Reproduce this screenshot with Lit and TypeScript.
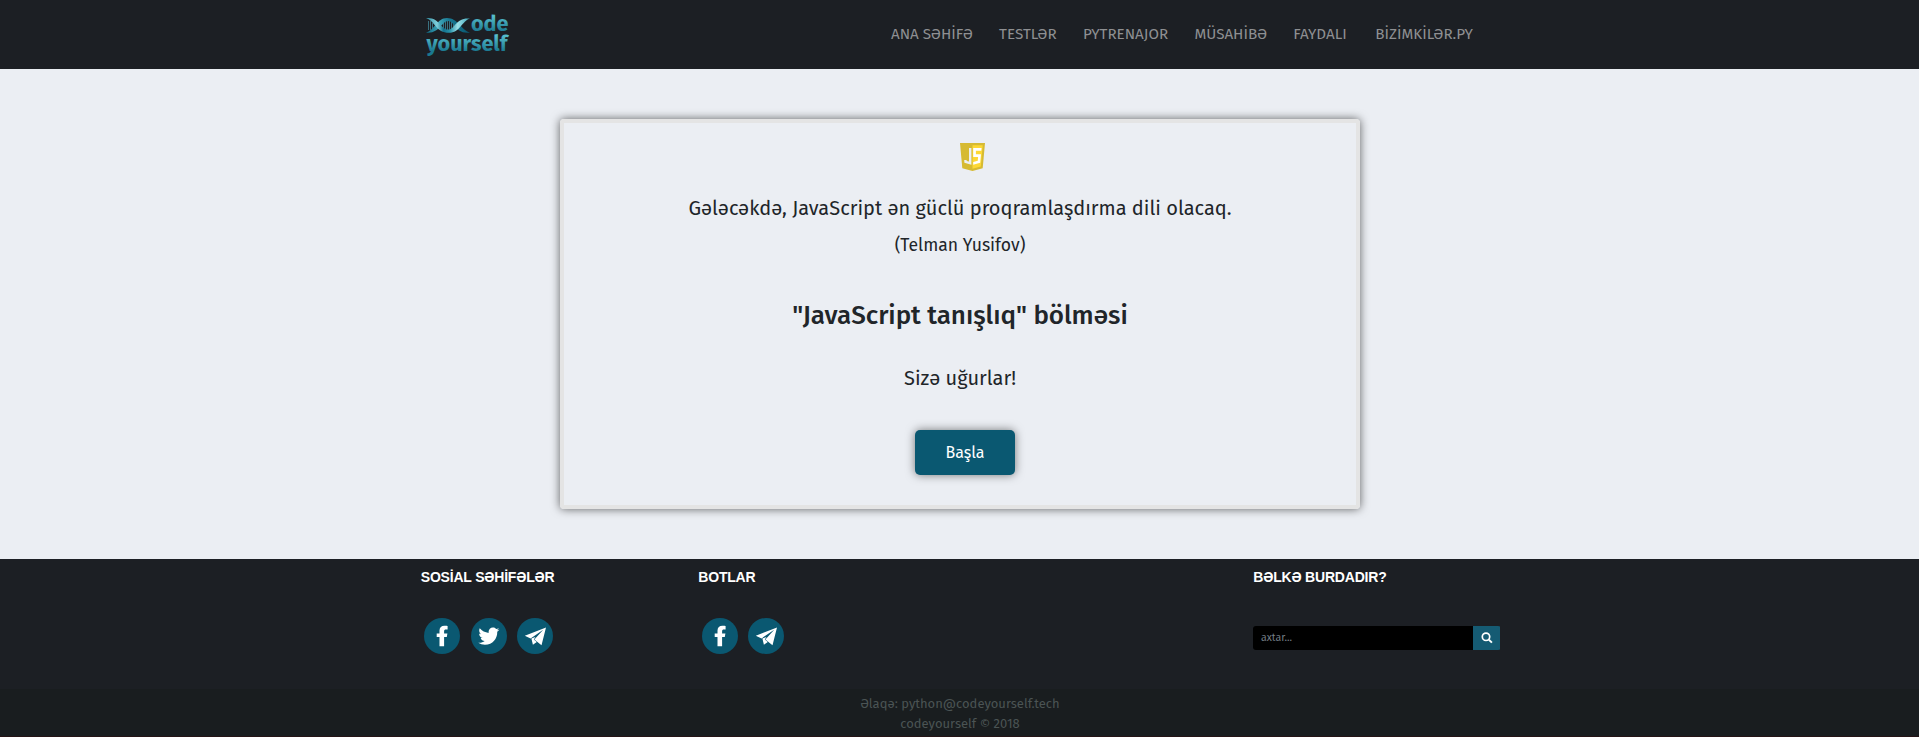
import { LitElement, html, css, svg } from "lit";
import { customElement, property } from "lit/decorators.js";

const icons: Record<string, unknown> = {
  facebook: svg`<path fill="#fff" d="M15.500 28.300V19H12.700V15.400H15.500V12.600C15.500 9.500 17.400 7.800 20.400 7.800C22 7.800 23.600 8 23.600 8V11.500H22C20.600 11.500 20.100 12.200 20.100 13.100V15.400H23.400L22.800 19H20.100V28.300Z"/>`,
  twitter: svg`<g transform="translate(7.300 7.600) scale(.0412)"><path fill="#fff" d="M459.4 151.7c.3 4.5.3 9.1.3 13.6 0 138.700-105.600 298.600-298.600 298.600-59.500 0-114.700-17.200-161.100-47.100 8.400 1 16.600 1.300 25.300 1.300 49.100 0 94.200-16.600 130.300-44.800-46.100-1-84.800-31.200-98.100-72.800 6.500 1 13 1.600 19.800 1.600 9.400 0 18.800-1.300 27.600-3.600-48.100-9.700-84.100-52-84.100-103v-1.300c14 7.800 30.200 12.700 47.400 13.300-28.300-18.800-46.800-51-46.800-87.400 0-19.500 5.200-37.400 14.300-53 51.700 63.700 129.300 105.300 216.400 109.800-1.600-7.800-2.600-15.900-2.600-24 0-57.800 46.800-104.900 104.900-104.900 30.200 0 57.500 12.700 76.700 33.100 23.700-4.500 46.500-13.300 66.600-25.300-7.800 24.400-24.400 44.800-46.100 57.800 21.100-2.300 41.600-8.100 60.400-16.200-14.300 20.800-32.200 39.300-52.600 54.300z"/></g>`,
  telegram: svg`<path fill="#fff" d="M29 9.500 7.800 17.800 13.600 20.400 26.200 11.700 17.400 21.600 24.500 27.300Z"/><path fill="#fff" d="M14.400 20.600 15.900 26.800 19.800 24 16.800 21.600 18.500 19Z"/>`,
};

@customElement("social-icon")
class SocialIcon extends LitElement {
  @property() name = "facebook";
  static styles = css`
    :host { display: block; width: 36px; height: 36px; }
    svg { display: block; }
  `;
  render() {
    return html`<svg width="36" height="36" viewBox="0 0 36 36"><circle cx="18" cy="18" r="18" fill="#0a5871"/>${icons[this.name]}</svg>`;
  }
}

const menu = ["ANA SƏHİFƏ", "TESTLƏR", "PYTRENAJOR", "MÜSAHİBƏ", "FAYDALI", "BİZİMKİLƏR.PY"];

@customElement("app-root")
class AppRoot extends LitElement {
  static styles = css`
    :host { display: flex; flex-direction: column; height: 737px; overflow: hidden; background: #ebeef3; color: #212529; font-family: "Fira Sans", "Noto Sans", sans-serif; white-space: nowrap; }
    header { height: 69px; flex: none; background: #1c1f24; display: flex; align-items: flex-start; padding-left: 424px; box-sizing: border-box; }
    .logo { display: block; margin-top: 12px; width: 90px; height: 46px; }
    .logo text { font-family: "Fira Sans", "Noto Sans", sans-serif; font-weight: 700; font-size: 21px; }
    nav { display: flex; gap: 26.300px; margin-left: 377px; margin-top: 19px; font-size: 15.200px; line-height: 30px; color: #8e8f92; }
    nav span:last-child { margin-left: 2.300px; }
    main { flex: none; height: 490px; display: flex; justify-content: center; align-items: flex-start; }
    .card { box-sizing: border-box; width: 800px; height: 390px; margin: 50px 0 0 1px; border: 4px solid #e4e4e4; border-radius: 4px; box-shadow: 0 0 10px rgba(0,0,0,.6); display: flex; flex-direction: column; align-items: center; }
    .js { display: block; flex: none; margin: 20px 0 0 25px; }
    .quote { margin-top: 22px; font-size: 20px; line-height: 30px; }
    .author { margin-top: 8px; font-size: 17.600px; line-height: 30px; }
    .title { margin-top: 35px; font-size: 26px; line-height: 40px; font-weight: 500; letter-spacing: -.04px; }
    .luck { margin-top: 27px; font-size: 20px; line-height: 30px; }
    .start { flex: none; display: flex; justify-content: center; box-sizing: border-box; width: 100px; height: 45px; margin: 37px 0 0 10px; padding: 0; border: 0; border-radius: 5px; background: #0a5871; color: #fff; font: 16px/46px "Fira Sans", "Noto Sans", sans-serif; box-shadow: 0 0 10px rgba(0,0,0,.5); }
    footer { height: 130px; flex: none; background: #1c1f24; display: grid; grid-template-columns: repeat(4, 277.5px); padding-left: 405.5px; }
    .col { padding: 3px 15px 0; }
    .head { color: #fff; font: bold 14px/30px "Liberation Sans", sans-serif; letter-spacing: -.2px; padding-left: .3px; }
    .icons { display: flex; gap: 10px; padding: 26px 0 0 3.500px; }
    .icons .first { margin-right: 1px; }
    .search { display: flex; height: 24px; margin-top: 34px; border-radius: 3px; overflow: hidden; }
    .field { width: 212px; padding-left: 8px; background: #000; color: #747d85; font-size: 10.500px; line-height: 23px; }
    .go { width: 27px; background: #155b73; display: flex; align-items: center; justify-content: center; }
    .bottom { flex: none; background: #191d1f; border-bottom: 1px solid #251416; display: flex; flex-direction: column; align-items: center; padding: 5px 0 0 1px; height: 42px; font-size: 13px; line-height: 20px; color: #4b5454; }
  `;
  render() {
    return html`
      <header>
        <svg class="logo" viewBox="0 0 90 46">
          <defs>
            <linearGradient id="a" x1="0" y1="0" x2="0" y2="1"><stop offset=".2" stop-color="#56bccb"/><stop offset=".8" stop-color="#1a7890"/></linearGradient>
            <linearGradient id="b" x1="0" y1="0" x2="1" y2="0"><stop offset="0" stop-color="#2f8da3"/><stop offset=".25" stop-color="#7fd0dc"/><stop offset=".4" stop-color="#12708c"/><stop offset=".55" stop-color="#2a93aa"/><stop offset=".72" stop-color="#9be0e8"/><stop offset="1" stop-color="#3ba3b7"/></linearGradient>
            <linearGradient id="c" x1="0" y1="0" x2="1" y2="0"><stop offset="0" stop-color="#0c6580"/><stop offset=".3" stop-color="#3fa6b9"/><stop offset=".5" stop-color="#1a7b95"/><stop offset="1" stop-color="#095770"/></linearGradient>
          </defs>
          <path d="M4.500 9V18M6.500 9V18M8.500 11V17M19.500 11V17M21.500 9V18M23.500 8V19M25.500 8V19M27.500 9V18M29.500 11V16" stroke="#3a7080" stroke-width="1"/>
          <path d="M2 20.500C11 18 13 6 23 6C34 6 37 18 46 20.500C31 22.500 31 9 24 9C18 9 15 22.500 2 20.500Z" fill="url(#c)"/>
          <path d="M2 6C15 4.500 17 17.500 24 17.500C31 17.500 32 5 46 6.500C38 9 36 20.800 25 20.800C12 20.800 11 9 2 6Z" fill="url(#b)"/>
          <text x="47" y="19" textLength="37.500" lengthAdjust="spacingAndGlyphs" fill="url(#a)">ode</text>
          <text x="2.500" y="38.500" textLength="81" lengthAdjust="spacingAndGlyphs" fill="url(#a)">yourself</text>
        </svg>
        <nav>${menu.map((t) => html`<span>${t}</span>`)}</nav>
      </header>
      <main>
        <section class="card">
          <svg class="js" width="25" height="28" viewBox="0 0 25 28">
            <path d="M0 0H25L22.700 25.200L12.500 28L2.300 25.200Z" fill="#d6ba32"/>
            <path d="M12.500 2.200H22.700L20.800 23.500L12.500 25.800Z" fill="#fdd835"/>
            <path d="M9 5H11.400V21.700L4.400 19.800L4.200 17H6.600L6.700 18L9 18.600Z" fill="#eceff1"/>
            <path d="M13.200 5H21.600L21.300 7.800H15.900V11.200H21L20.200 19.800L13.200 21.700V19L17.800 17.800L18.100 13.900H13.200Z" fill="#fff"/>
          </svg>
          <div class="quote">Gələcəkdə, JavaScript ən güclü proqramlaşdırma dili olacaq.</div>
          <div class="author">(Telman Yusifov)</div>
          <div class="title">"JavaScript tanışlıq" bölməsi</div>
          <div class="luck">Sizə uğurlar!</div>
          <button class="start">Başla</button>
        </section>
      </main>
      <footer>
        <div class="col">
          <div class="head">SOSİAL SƏHİFƏLƏR</div>
          <div class="icons"><social-icon class="first" name="facebook"></social-icon><social-icon name="twitter"></social-icon><social-icon name="telegram"></social-icon></div>
        </div>
        <div class="col">
          <div class="head">BOTLAR</div>
          <div class="icons"><social-icon name="facebook"></social-icon><social-icon name="telegram"></social-icon></div>
        </div>
        <div class="col"></div>
        <div class="col">
          <div class="head">BƏLKƏ BURDADIR?</div>
          <div class="search">
            <div class="field">axtar...</div>
            <div class="go"><svg width="12" height="12" viewBox="0 0 12 12"><circle cx="5" cy="4.800" r="3.700" fill="none" stroke="#fff" stroke-width="1.700"/><path d="M7.800 7.600L10.900 10.600" stroke="#fff" stroke-width="2"/></svg></div>
          </div>
        </div>
      </footer>
      <div class="bottom">
        <span>Əlaqə: python@codeyourself.tech</span>
        <span>codeyourself © 2018</span>
      </div>
    `;
  }
}
